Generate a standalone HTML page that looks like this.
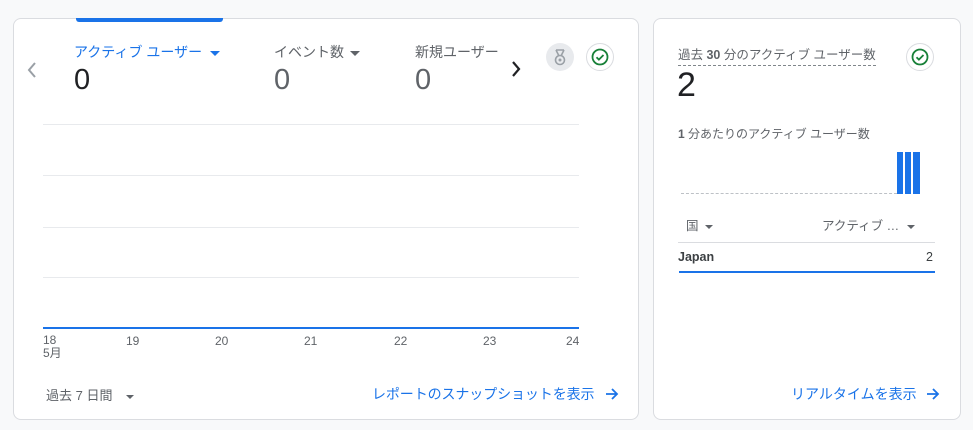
<!DOCTYPE html>
<html><head><meta charset="utf-8"><style>
*{margin:0;padding:0;box-sizing:border-box}
body{width:973px;height:430px;background:#f8f9fa;position:relative;overflow:hidden;font-family:"Liberation Sans","Noto Sans CJK JP",sans-serif;color:#5f6368}
.card{position:absolute;background:#fff;border:1px solid #dadce0;border-radius:8px}
.a{position:absolute;white-space:nowrap}
.g{position:absolute;left:43px;width:536px;height:1px;background:#e8eaed}
.tri{display:inline-block;width:0;height:0;border-left:5px solid transparent;border-right:5px solid transparent;border-top:5px solid #5f6368;vertical-align:middle;margin-left:6px}
</style></head><body>
<div class="card" style="left:13px;top:18px;width:626px;height:402px"></div>
<div class="a" style="left:76px;top:18px;width:147px;height:4px;background:#1a73e8;border-radius:0 0 3px 3px"></div>
<svg class="a" style="left:24px;top:60px" width="16" height="20" viewBox="0 0 16 20"><path d="M11 3L5 10l6 7" fill="none" stroke="#9aa0a6" stroke-width="2"/></svg>
<div class="a" style="left:74px;top:42px;font-size:14px;color:#1a73e8">アクティブ ユーザー<span class="tri" style="border-top-color:#1a73e8;margin-left:8px"></span></div>
<div class="a" style="left:74px;top:64px;font-size:29px;color:#202124">0</div>
<div class="a" style="left:274px;top:42px;font-size:14px">イベント数<span class="tri"></span></div>
<div class="a" style="left:274px;top:64px;font-size:29px;color:#5f6368">0</div>
<div class="a" style="left:415px;top:42px;font-size:14px;width:83px;overflow:hidden">新規ユーザー数</div>
<div class="a" style="left:415px;top:64px;font-size:29px;color:#5f6368">0</div>
<svg class="a" style="left:508px;top:59px" width="16" height="20" viewBox="0 0 16 20"><path d="M5 3l6 7-6 7" fill="none" stroke="#202124" stroke-width="2.2"/></svg>
<div class="a" style="left:546px;top:43px;width:28px;height:28px;border-radius:50%;background:#e8eaed"><svg width="28" height="28" viewBox="0 0 28 28"><path d="M10 7l3 6M18 7l-3 6M10 7h8" fill="none" stroke="#9aa0a6" stroke-width="1.6"/><circle cx="14" cy="17" r="4.5" fill="none" stroke="#9aa0a6" stroke-width="1.6"/><circle cx="14" cy="17" r="1.5" fill="#9aa0a6"/></svg></div>
<div class="a" style="left:586px;top:43px;width:28px;height:28px;border-radius:50%;border:1px solid #dadce0;background:#fff"><svg width="26" height="26" viewBox="0 0 26 26"><circle cx="13" cy="13" r="7.5" fill="none" stroke="#188038" stroke-width="1.8"/><path d="M9.5 13.2l2.4 2.4 4.6-4.6" fill="none" stroke="#188038" stroke-width="1.8"/></svg></div>
<div class="g" style="top:124px"></div><div class="g" style="top:175px"></div><div class="g" style="top:227px"></div><div class="g" style="top:277px"></div>
<div class="a" style="left:43px;top:327px;width:536px;height:2px;background:#1a73e8"></div>
<div class="a" style="left:43px;top:334px;font-size:12px;line-height:13px">18<br>5月</div>
<div class="a" style="left:126px;top:334px;font-size:12px">19</div>
<div class="a" style="left:215px;top:334px;font-size:12px">20</div>
<div class="a" style="left:304px;top:334px;font-size:12px">21</div>
<div class="a" style="left:394px;top:334px;font-size:12px">22</div>
<div class="a" style="left:483px;top:334px;font-size:12px">23</div>
<div class="a" style="left:566px;top:334px;font-size:12px">24</div>
<div class="a" style="left:46px;top:385px;font-size:13px">過去 7 日間 <span class="tri" style="margin-left:10px;border-width:4px 4px 0"></span></div>
<div class="a" style="left:372px;top:384px;font-size:14px;color:#1a73e8;letter-spacing:-0.1px">レポートのスナップショットを表示</div>
<svg class="a" style="left:604px;top:386px" width="16" height="16" viewBox="0 0 16 16"><path d="M2 8h11M8 3l5 5-5 5" fill="none" stroke="#1a73e8" stroke-width="1.8"/></svg>

<div class="card" style="left:653px;top:18px;width:308px;height:402px"></div>
<div class="a" style="left:678px;top:44px;font-size:12.5px;border-bottom:1px dashed #80868b;padding-bottom:2px">過去 <b>30</b> 分のアクティブ ユーザー数</div>
<div class="a" style="left:906px;top:43px;width:28px;height:28px;border-radius:50%;border:1px solid #dadce0;background:#fff"><svg width="26" height="26" viewBox="0 0 26 26"><circle cx="13" cy="13" r="7.5" fill="none" stroke="#188038" stroke-width="1.8"/><path d="M9.5 13.2l2.4 2.4 4.6-4.6" fill="none" stroke="#188038" stroke-width="1.8"/></svg></div>
<div class="a" style="left:677px;top:66px;font-size:34px;color:#202124">2</div>
<div class="a" style="left:678px;top:125px;font-size:12px"><b>1</b> 分あたりのアクティブ ユーザー数</div>
<div class="a" style="left:681px;top:193px;width:216px;border-top:1px dashed #bdc1c6"></div>
<div class="a" style="left:897px;top:152px;width:6px;height:42px;background:#1a73e8"></div>
<div class="a" style="left:905px;top:152px;width:6px;height:42px;background:#1a73e8"></div>
<div class="a" style="left:913px;top:152px;width:7px;height:42px;background:#1a73e8"></div>
<div class="a" style="left:686px;top:215px;font-size:12.5px">国<span class="tri" style="border-width:4px 4px 0"></span></div>
<div class="a" style="left:822px;top:215px;font-size:12.5px">アクティブ …<span class="tri" style="border-width:4px 4px 0;margin-left:8px"></span></div>
<div class="a" style="left:678px;top:242px;width:257px;height:1px;background:#dadce0"></div>
<div class="a" style="left:678px;top:250px;font-size:12.5px;color:#3c4043;font-weight:bold">Japan</div>
<div class="a" style="left:926px;top:250px;font-size:12.5px;color:#3c4043">2</div>
<div class="a" style="left:679px;top:271px;width:256px;height:2px;background:#1a73e8"></div>
<div class="a" style="left:791px;top:384px;font-size:14px;color:#1a73e8">リアルタイムを表示</div>
<svg class="a" style="left:925px;top:386px" width="16" height="16" viewBox="0 0 16 16"><path d="M2 8h11M8 3l5 5-5 5" fill="none" stroke="#1a73e8" stroke-width="1.8"/></svg>
</body></html>
